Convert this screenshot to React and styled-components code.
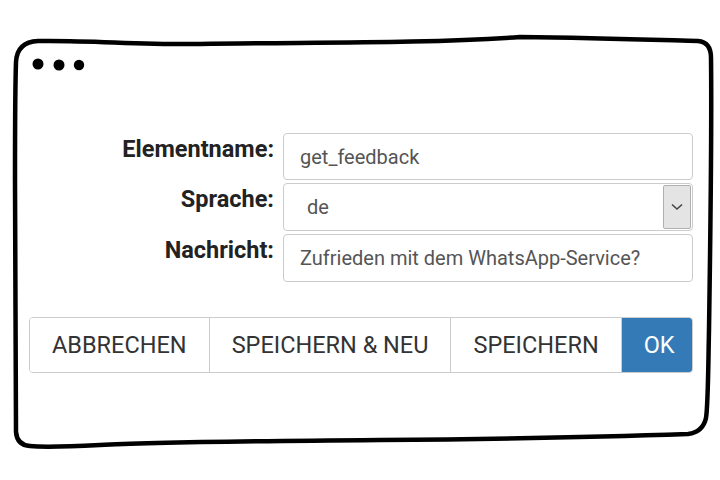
import React from "react";
import styled, { createGlobalStyle } from "styled-components";

const GlobalStyle = createGlobalStyle`
  html, body {
    margin: 0;
    padding: 0;
    background: #ffffff;
  }
  body {
    font-family: Roboto, "Liberation Sans", Arial, sans-serif;
  }
`;

const Page = styled.div`
  position: relative;
  width: 720px;
  height: 480px;
  overflow: hidden;
  background: #ffffff;
`;

const Sketch = styled.svg`
  position: absolute;
  left: 0;
  top: 0;
  width: 720px;
  height: 480px;
  pointer-events: none;
`;

const Content = styled.div`
  position: relative;
  display: flex;
  flex-direction: column;
  gap: 35px;
  width: 664px;
  padding: 133px 0 0 29px;
`;

const Form = styled.div`
  display: grid;
  grid-template-columns: 245px 410px;
  grid-template-rows: 47px 48px 48px;
  column-gap: 9px;
  row-gap: 3px;
`;

const Label = styled.label`
  align-self: start;
  padding-top: 4px;
  font-size: 23.5px;
  line-height: 24px;
  font-weight: 700;
  color: #222222;
  text-align: right;
`;

const TextInput = styled.input`
  box-sizing: border-box;
  width: 100%;
  height: 100%;
  margin: 0;
  padding: 0 0 0 16px;
  font-family: inherit;
  font-size: 20px;
  color: #555555;
  background: #ffffff;
  border: 1px solid #cccccc;
  border-radius: 4px;
  outline: none;
`;

const SelectBox = styled.div`
  box-sizing: border-box;
  display: flex;
  align-items: stretch;
  height: 100%;
  padding: 1px;
  border: 1px solid #cccccc;
  border-radius: 4px;
  background: #ffffff;
`;

const SelectValue = styled.span`
  flex: 1;
  display: flex;
  align-items: center;
  padding-left: 22px;
  font-size: 20px;
  color: #555555;
`;

const SelectArrow = styled.span`
  display: flex;
  align-items: center;
  justify-content: center;
  width: 26px;
  background: #e4e4e4;
  border: 1px solid #b0b0b0;
  border-radius: 2px;
`;

const ButtonGroup = styled.div`
  display: flex;
  height: 56px;
  box-sizing: border-box;
  border: 1px solid #cccccc;
  border-radius: 4px;
  overflow: hidden;
`;

const Button = styled.button`
  flex: ${(p) => p.$grow || 0} 0 auto;
  margin: 0;
  padding: 0 22px;
  font-family: inherit;
  font-size: 23.5px;
  color: ${(p) => (p.$primary ? "#ffffff" : "#333333")};
  background: ${(p) => (p.$primary ? "#337ab7" : "#ffffff")};
  border: none;
  border-left: ${(p) => (p.$first ? "none" : "1px solid #cccccc")};
  cursor: pointer;
`;

const Frame = () => (
  <Sketch viewBox="0 0 720 480">
    <path
      d="M16 62 Q17 42 38 41 C90 40 140 45 200 44 C300 42 420 44 520 37 C600 38 660 40 698 41 Q711 42 711 58 C712 140 710 260 709 330 C708 380 708 405 706 418 Q703 432 688 434 C600 437 500 439 380 440 C260 441 150 442 100 445 C60 447 40 447 30 446 Q17 445 16 432 C15 360 16 250 15 180 C15 120 15 90 16 62 Z"
      fill="none"
      stroke="#000000"
      strokeWidth="4.5"
      strokeLinejoin="round"
    />
    <circle cx="38" cy="64" r="5.5" fill="#000000" />
    <circle cx="59" cy="65" r="5.5" fill="#000000" />
    <circle cx="79" cy="65" r="5.2" fill="#000000" />
  </Sketch>
);

const App = () => {
  return (
    <Page>
      <GlobalStyle />
      <Frame />
      <Content>
        <Form>
          <Label>Elementname:</Label>
          <TextInput defaultValue="get_feedback" />
          <Label>Sprache:</Label>
          <SelectBox>
            <SelectValue>de</SelectValue>
            <SelectArrow>
              <svg width="12" height="8" viewBox="0 0 12 8">
                <path d="M1 1.5 L6 6 L11 1.5" fill="none" stroke="#444444" strokeWidth="1.6" />
              </svg>
            </SelectArrow>
          </SelectBox>
          <Label>Nachricht:</Label>
          <TextInput defaultValue="Zufrieden mit dem WhatsApp-Service?" />
        </Form>
        <ButtonGroup>
          <Button $first $grow={1}>ABBRECHEN</Button>
          <Button $grow={1}>SPEICHERN &amp; NEU</Button>
          <Button $grow={1}>SPEICHERN</Button>
          <Button $primary>OK</Button>
        </ButtonGroup>
      </Content>
    </Page>
  );
};

export default App;
